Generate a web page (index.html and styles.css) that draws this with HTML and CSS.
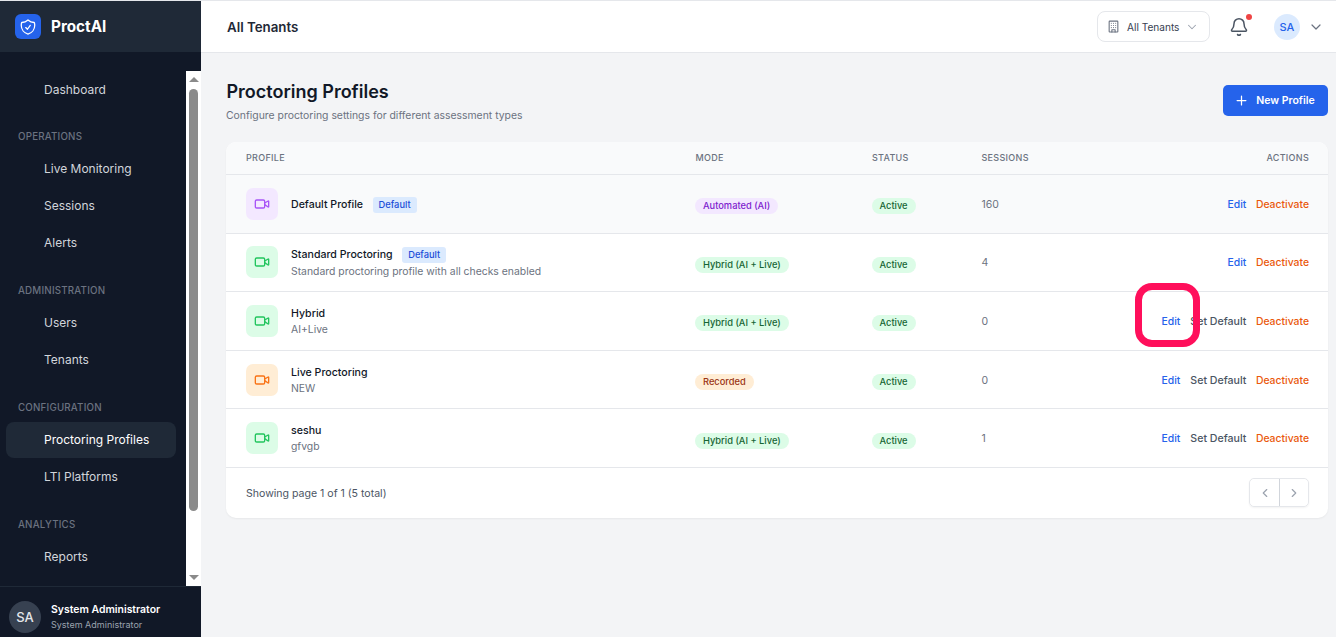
FILE: index.html
```html
<!DOCTYPE html>
<html lang="en">
<head>
<meta charset="utf-8">
<title>ProctAI</title>
<link rel="stylesheet" href="styles.css">
</head>
<body>
<div class="app">
  <aside class="sidebar">
    <div class="brand">
      <div class="logo">
        <svg width="18" height="18" viewBox="0 0 24 24" fill="none" stroke="#fff" stroke-width="1.7" stroke-linecap="round" stroke-linejoin="round"><path d="M9 12.75 11.25 15 15 9.75m-3-7.036A11.959 11.959 0 0 1 3.598 6 11.99 11.99 0 0 0 3 9.749c0 5.592 3.824 10.29 9 11.623 5.176-1.332 9-6.03 9-11.622 0-1.31-.21-2.571-.598-3.751h-.152c-3.196 0-6.1-1.248-8.25-3.285Z"/></svg>
      </div>
      <span class="brand-name">ProctAI</span>
    </div>
    <div class="nav-wrap">
      <nav class="nav">
        <a class="nav-item">Dashboard</a>
        <div class="nav-title">OPERATIONS</div>
        <a class="nav-item">Live Monitoring</a>
        <a class="nav-item">Sessions</a>
        <a class="nav-item">Alerts</a>
        <div class="nav-title">ADMINISTRATION</div>
        <a class="nav-item">Users</a>
        <a class="nav-item">Tenants</a>
        <div class="nav-title">CONFIGURATION</div>
        <a class="nav-item active">Proctoring Profiles</a>
        <a class="nav-item">LTI Platforms</a>
        <div class="nav-title">ANALYTICS</div>
        <a class="nav-item">Reports</a>
      </nav>
      <div class="scrollbar">
        <span class="arrow-up"></span>
        <span class="thumb"></span>
        <span class="arrow-down"></span>
      </div>
    </div>
    <div class="user">
      <div class="user-avatar">SA</div>
      <div class="user-text">
        <div class="user-name">System Administrator</div>
        <div class="user-role">System Administrator</div>
      </div>
    </div>
  </aside>
  <main class="main">
    <header class="topbar">
      <div class="topbar-title">All Tenants</div>
      <div class="topbar-right">
        <button class="tenant-select">
          <svg width="13" height="13" viewBox="0 0 24 24" fill="none" stroke="#6b7280" stroke-width="2" stroke-linecap="round" stroke-linejoin="round"><rect x="4" y="2" width="16" height="20" rx="1"/><path d="M9 22v-4h6v4M8 6h.01M12 6h.01M16 6h.01M8 10h.01M12 10h.01M16 10h.01M8 14h.01M12 14h.01M16 14h.01"/></svg>
          <span>All Tenants</span>
          <svg class="sel-chev" width="14" height="14" viewBox="0 0 24 24" fill="none" stroke="#9ca3af" stroke-width="1.8" stroke-linecap="round" stroke-linejoin="round"><path d="m6 9 6 6 6-6"/></svg>
        </button>
        <div class="bell">
          <svg width="20" height="20" viewBox="0 0 24 24" fill="none" stroke="#4b5563" stroke-width="1.8" stroke-linecap="round" stroke-linejoin="round"><path d="M10.27 21a2 2 0 0 0 3.46 0"/><path d="M3.26 15.33A1 1 0 0 0 4 17h16a1 1 0 0 0 .74-1.67C19.41 13.96 18 12.5 18 8A6 6 0 0 0 6 8c0 4.5-1.41 5.96-2.74 7.33"/></svg>
          <span class="bell-dot"></span>
        </div>
        <div class="account">
          <div class="account-avatar">SA</div>
          <svg width="16" height="16" viewBox="0 0 24 24" fill="none" stroke="#6b7280" stroke-width="1.8" stroke-linecap="round" stroke-linejoin="round"><path d="m6 9 6 6 6-6"/></svg>
        </div>
      </div>
    </header>
    <section class="content">
      <div class="page-head">
        <div>
          <h1 class="page-title">Proctoring Profiles</h1>
          <p class="page-sub">Configure proctoring settings for different assessment types</p>
        </div>
        <button class="new-btn">
          <svg width="15" height="15" viewBox="0 0 24 24" fill="none" stroke="#fff" stroke-width="2" stroke-linecap="round"><path d="M5 12h14M12 5v14"/></svg>
          <span>New Profile</span>
        </button>
      </div>
      <div class="card">
        <div class="row row-head">
          <div>PROFILE</div><div>MODE</div><div>STATUS</div><div>SESSIONS</div><div class="right">ACTIONS</div>
        </div>

        <div class="row row-body tinted">
          <div class="profile">
            <div class="pi pi-purple"><svg class="vid" viewBox="0 0 24 24"><path d="m16 13 5.22 3.48a.5.5 0 0 0 .78-.42V7.87a.5.5 0 0 0-.75-.43L16 10.5"/><rect x="2" y="6" width="14" height="12" rx="2"/></svg></div>
            <div class="pt"><div class="pn">Default Profile<span class="tag">Default</span></div></div>
          </div>
          <div class="badge-cell"><span class="pill purple">Automated (AI)</span></div>
          <div class="badge-cell"><span class="pill green">Active</span></div>
          <div class="num">160</div>
          <div class="actions"><a class="edit">Edit</a><a class="deact">Deactivate</a></div>
        </div>

        <div class="row row-body">
          <div class="profile">
            <div class="pi pi-green"><svg class="vid" viewBox="0 0 24 24"><path d="m16 13 5.22 3.48a.5.5 0 0 0 .78-.42V7.87a.5.5 0 0 0-.75-.43L16 10.5"/><rect x="2" y="6" width="14" height="12" rx="2"/></svg></div>
            <div class="pt"><div class="pn">Standard Proctoring<span class="tag">Default</span></div><div class="pd">Standard proctoring profile with all checks enabled</div></div>
          </div>
          <div class="badge-cell"><span class="pill green">Hybrid (AI + Live)</span></div>
          <div class="badge-cell"><span class="pill green">Active</span></div>
          <div class="num">4</div>
          <div class="actions"><a class="edit">Edit</a><a class="deact">Deactivate</a></div>
        </div>

        <div class="row row-body">
          <div class="profile">
            <div class="pi pi-green"><svg class="vid" viewBox="0 0 24 24"><path d="m16 13 5.22 3.48a.5.5 0 0 0 .78-.42V7.87a.5.5 0 0 0-.75-.43L16 10.5"/><rect x="2" y="6" width="14" height="12" rx="2"/></svg></div>
            <div class="pt"><div class="pn">Hybrid</div><div class="pd">AI+Live</div></div>
          </div>
          <div class="badge-cell"><span class="pill green">Hybrid (AI + Live)</span></div>
          <div class="badge-cell"><span class="pill green">Active</span></div>
          <div class="num">0</div>
          <div class="actions"><a class="edit">Edit</a><a class="setd">Set Default</a><a class="deact">Deactivate</a><span class="highlight"></span></div>
        </div>

        <div class="row row-body">
          <div class="profile">
            <div class="pi pi-orange"><svg class="vid" viewBox="0 0 24 24"><path d="m16 13 5.22 3.48a.5.5 0 0 0 .78-.42V7.87a.5.5 0 0 0-.75-.43L16 10.5"/><rect x="2" y="6" width="14" height="12" rx="2"/></svg></div>
            <div class="pt"><div class="pn">Live Proctoring</div><div class="pd">NEW</div></div>
          </div>
          <div class="badge-cell"><span class="pill orange">Recorded</span></div>
          <div class="badge-cell"><span class="pill green">Active</span></div>
          <div class="num">0</div>
          <div class="actions"><a class="edit">Edit</a><a class="setd">Set Default</a><a class="deact">Deactivate</a></div>
        </div>

        <div class="row row-body">
          <div class="profile">
            <div class="pi pi-green"><svg class="vid" viewBox="0 0 24 24"><path d="m16 13 5.22 3.48a.5.5 0 0 0 .78-.42V7.87a.5.5 0 0 0-.75-.43L16 10.5"/><rect x="2" y="6" width="14" height="12" rx="2"/></svg></div>
            <div class="pt"><div class="pn">seshu</div><div class="pd">gfvgb</div></div>
          </div>
          <div class="badge-cell"><span class="pill green">Hybrid (AI + Live)</span></div>
          <div class="badge-cell"><span class="pill green">Active</span></div>
          <div class="num">1</div>
          <div class="actions"><a class="edit">Edit</a><a class="setd">Set Default</a><a class="deact">Deactivate</a></div>
        </div>

        <div class="card-foot">
          <span class="foot-text">Showing page 1 of 1 (5 total)</span>
          <div class="pager">
            <button class="pg"><svg width="14" height="14" viewBox="0 0 24 24" fill="none" stroke="#9ca3af" stroke-width="2" stroke-linecap="round" stroke-linejoin="round"><path d="m15 18-6-6 6-6"/></svg></button>
            <button class="pg"><svg width="14" height="14" viewBox="0 0 24 24" fill="none" stroke="#9ca3af" stroke-width="2" stroke-linecap="round" stroke-linejoin="round"><path d="m9 18 6-6-6-6"/></svg></button>
          </div>
        </div>
      </div>
    </section>
  </main>
</div>
</body>
</html>
```
FILE: styles.css
```css
* { box-sizing: border-box; }
html, body { margin: 0; height: 100%; overflow: hidden; }
body { font-family: Inter, "Liberation Sans", sans-serif; color: #111827; padding-top: 1px; background-color: #e5e7eb; }
button { font-family: inherit; }

.app { display: flex; height: 636px; background: #f3f4f6; }

.sidebar { width: 201px; flex: none; display: flex; flex-direction: column; background: #111827; }
.brand { height: 51px; flex: none; display: flex; align-items: center; gap: 10px; padding-left: 15px; background: #1f2937; }
.logo { width: 26px; height: 25px; border-radius: 6px; background: #2563eb; display: flex; align-items: center; justify-content: center; }
.brand-name { font-size: 15.25px; font-weight: 700; color: #fff; }

.nav-wrap { flex: 1; min-height: 0; display: flex; padding-top: 19px; }
.nav { flex: 1; padding: 0 10px 0 6px; }
.nav-item { display: flex; align-items: center; height: 36px; padding-left: 38px; font-size: 12px; color: #d1d5db; border-radius: 8px; margin-bottom: 0.9px; }
.nav-item.active { background: #1f2937; color: #fff; }
.nav-title { font-size: 9.75px; font-weight: 500; color: #6b7280; letter-spacing: 0.2px; padding-left: 12px; height: 12px; line-height: 12px; margin: 24.4px 0 7.6px; }

.scrollbar { width: 15px; flex: none; background: #fff; display: flex; flex-direction: column; align-items: center; justify-content: space-between; position: relative; padding: 6px 0; }
.arrow-up { width: 0; height: 0; border: 5px solid transparent; border-top: 0; border-bottom: 5px solid #8a8a8a; }
.arrow-down { width: 0; height: 0; border: 5px solid transparent; border-bottom: 0; border-top: 5px solid #8a8a8a; }
.thumb { position: absolute; top: 18px; left: 3px; width: 9px; height: 422px; border-radius: 5px; background: #8a8a8a; }

.user { height: 51px; flex: none; border-top: 1px solid #1f2937; display: flex; align-items: center; gap: 10px; padding: 10px 0 0 9px; background: #111827; }
.user-avatar { width: 32px; height: 32px; border-radius: 50%; background: #374151; color: #e5e7eb; display: flex; align-items: center; justify-content: center; font-size: 13px; font-weight: 500; }
.user-name { font-size: 10.45px; font-weight: 600; color: #fff; line-height: 15px; }
.user-role { font-size: 9px; color: #9ca3af; line-height: 15px; }

.main { flex: 1; min-width: 0; display: flex; flex-direction: column; }
.topbar { height: 52px; flex: none; background: #fff; border-bottom: 1px solid #e5e7eb; display: flex; align-items: center; justify-content: space-between; padding: 0 12.5px 0 26px; }
.topbar-title { font-size: 13.3px; font-weight: 600; color: #1f2937; }
.topbar-right { display: flex; align-items: center; }
.tenant-select { width: 113px; height: 31px; background: #fff; border: 1px solid #e5e7eb; border-radius: 8px; display: flex; align-items: center; gap: 7px; padding: 0 0 0 9px; font-size: 10.1px; color: #374151; }
.sel-chev { margin-left: -1px; }
.bell { position: relative; width: 20px; height: 20px; margin: 0 25px 0 19px; }
.bell svg { display: block; }
.bell-dot { position: absolute; right: -3px; top: -3px; width: 6.5px; height: 6.5px; border-radius: 50%; background: #ef4444; }
.account { display: flex; align-items: center; gap: 7.5px; }
.account-avatar { width: 26px; height: 26px; border-radius: 50%; background: #dbeafe; color: #2563eb; display: flex; align-items: center; justify-content: center; font-size: 11px; font-weight: 500; }

.content { flex: 1; padding: 26px 8px 0 25px; }
.page-head { display: flex; justify-content: space-between; align-items: flex-start; height: 63px; }
.page-title { margin: 0 0 0 0.5px; font-size: 18px; line-height: 26px; font-weight: 600; color: #111827; }
.page-sub { margin: 3px 0 0; font-size: 10.4px; line-height: 16px; color: #6b7280; }
.new-btn { margin-top: 6px; width: 105px; height: 31px; border: 0; padding: 0 2px 0 0; border-radius: 5px; background: #2563eb; color: #fff; display: flex; align-items: center; justify-content: center; gap: 7px; font-size: 10.5px; font-weight: 600; }

.card { background: #fff; border-radius: 10px; box-shadow: 0 1px 2px rgba(0,0,0,.05); }
.row { display: grid; grid-template-columns: 449.5px 176.5px 109.5px 90px 1fr; align-items: center; padding: 0 19px 0 20px; border-bottom: 1px solid #e5e7eb; }
.row > div { min-width: 0; }
.row-head { height: 33px; padding-bottom: 2px; background: #f9fafb; border-radius: 10px 10px 0 0; font-size: 9px; font-weight: 500; color: #6b7280; letter-spacing: 0.3px; }
.right { text-align: right; }
.row-body { height: 58.6px; font-size: 10.5px; }
.tinted { background: #f9fafb; }
.profile { display: flex; align-items: center; gap: 13px; }
.pi { width: 32px; height: 32px; border-radius: 7px; display: flex; align-items: center; justify-content: center; flex: none; }
.vid { width: 16px; height: 16px; fill: none; stroke: currentColor; stroke-width: 2; stroke-linecap: round; stroke-linejoin: round; }
.pi-purple { background: #f3e8ff; color: #a855f7; }
.pi-green { background: #dcfce7; color: #22c55e; }
.pi-orange { background: #ffedd5; color: #f97316; }
.pt { padding-top: 2px; }
.pn { font-size: 10.6px; font-weight: 500; color: #111827; line-height: 16px; display: flex; align-items: center; }
.pd { font-size: 10.4px; color: #6b7280; line-height: 16px; }
.tag { margin: 0.5px 0 0.5px 9.5px; padding: 0 6px; height: 16px; line-height: 16px; background: #dbeafe; color: #1d4ed8; font-size: 9.3px; border-radius: 3px; }
.badge-cell { padding-top: 5px; }
.pill { display: inline-block; margin-left: -0.5px; height: 16px; line-height: 16px; padding: 0 8px; border-radius: 8px; font-size: 9.3px; font-weight: 500; }
.pill.green { background: #dcfce7; color: #166534; }
.pill.purple { background: #f3e8ff; color: #7e22ce; }
.pill.orange { background: #ffedd5; color: #9a3412; }
.num { color: #6b7280; font-size: 10.5px; padding-top: 1px; }
.actions { position: relative; display: flex; justify-content: flex-end; gap: 9.5px; padding-top: 1px; font-size: 10.4px; font-weight: 500; }
.edit { color: #2563eb; }
.setd { color: #4b5563; font-size: 10.6px; margin-left: 0.5px; }
.deact { color: #ea580c; }
.highlight { position: absolute; right: 109px; top: -31px; width: 65px; height: 64px; border: 7.5px solid #ff0f5b; border-radius: 17px; }

.card-foot { height: 50px; display: flex; align-items: center; justify-content: space-between; padding: 0 19px 0 20px; font-size: 10.55px; color: #4b5563; }
.foot-text { padding-top: 2px; }
.pager { display: flex; border: 1px solid #e5e7eb; border-radius: 5px; box-shadow: 0 1px 2px rgba(0,0,0,.05); }
.pg { width: 29px; height: 27px; border: 0; background: #fff; padding: 0; display: flex; align-items: center; justify-content: center; border-radius: 5px; }
.pg + .pg { border-left: 1px solid #d1d5db; border-radius: 0 5px 5px 0; }
```
